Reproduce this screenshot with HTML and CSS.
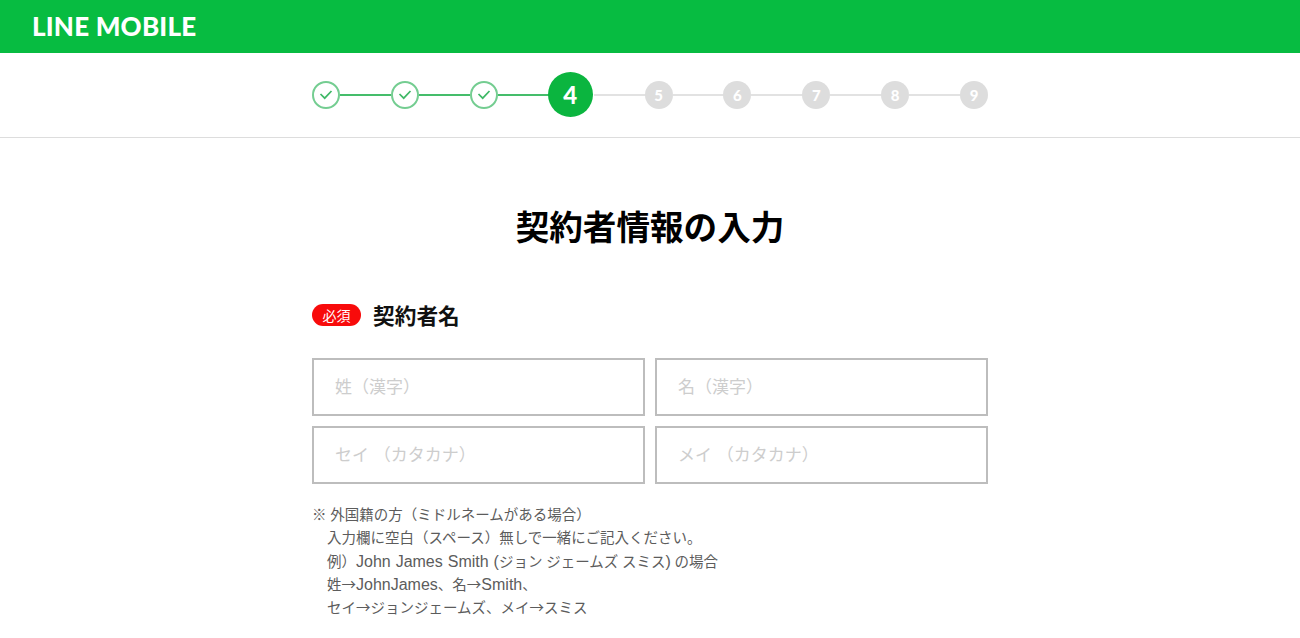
FILE: index.html
```html
<!DOCTYPE html>
<html lang="ja">
<head>
  <meta charset="UTF-8" />
  <title>LINE MOBILE</title>
  <link rel="stylesheet" href="styles.css">
</head>
<body>

<header class="cabecalho">
  <div class="logo">LINE MOBILE</div>
</header>

<div class="passos-area">
  <ol class="passos">
    <li class="passo feito"><svg width="14" height="12" viewBox="0 0 14 12"><path d="M1.5 5 L5.7 9.2 L12.5 2" fill="none" stroke="#3fb866" stroke-width="1.7"/></svg></li>
    <li class="linha verde"></li>
    <li class="passo feito"><svg width="14" height="12" viewBox="0 0 14 12"><path d="M1.5 5 L5.7 9.2 L12.5 2" fill="none" stroke="#3fb866" stroke-width="1.7"/></svg></li>
    <li class="linha verde"></li>
    <li class="passo feito"><svg width="14" height="12" viewBox="0 0 14 12"><path d="M1.5 5 L5.7 9.2 L12.5 2" fill="none" stroke="#3fb866" stroke-width="1.7"/></svg></li>
    <li class="linha verde"></li>
    <li class="passo atual">4</li>
    <li class="linha"></li>
    <li class="passo">5</li>
    <li class="linha"></li>
    <li class="passo">6</li>
    <li class="linha"></li>
    <li class="passo">7</li>
    <li class="linha"></li>
    <li class="passo">8</li>
    <li class="linha"></li>
    <li class="passo">9</li>
  </ol>
</div>

<main class="conteudo">
  <h1 class="titulo">契約者情報の入力</h1>

  <div class="rotulo">
    <span class="selo">必須</span>
    <h2>契約者名</h2>
  </div>

  <div class="campos">
    <div class="campo">姓（漢字）</div>
    <div class="campo">名（漢字）</div>
    <div class="campo">セイ （カタカナ）</div>
    <div class="campo">メイ （カタカナ）</div>
  </div>

  <div class="nota">
    <p>※ 外国籍の方（ミドルネームがある場合）</p>
    <p class="recuo">入力欄に空白（スペース）無しで一緒にご記入ください。</p>
    <p class="recuo">例）<span class="latim">John James Smith (</span>ジョン ジェームズ スミス<span class="latim">)</span> の場合</p>
    <p class="recuo">姓→<span class="latim">JohnJames</span>、名→<span class="latim">Smith</span>、</p>
    <p class="recuo">セイ→ジョンジェームズ、メイ→スミス</p>
  </div>
</main>

</body>
</html>
```

FILE: styles.css
```css
* {
  box-sizing: border-box;
}

html,
body {
  height: 638px;
  overflow: hidden;
}

body {
  margin: 0;
  font-family: "Liberation Sans", "Noto Sans CJK JP", sans-serif;
  background-color: #fff;
}

.cabecalho {
  height: 53px;
  background-color: #07bc41;
  padding-left: 32px;
  display: flex;
  align-items: center;
}

.logo {
  font-family: "Lato", sans-serif;
  font-weight: 900;
  font-size: 26px;
  letter-spacing: 0.2px;
  color: #fff;
  margin-top: -1px;
}

.passos-area {
  height: 85px;
  border-bottom: 1px solid #ddd;
  display: flex;
  justify-content: center;
  align-items: center;
}

.passos {
  list-style: none;
  margin: 0 0 1px;
  padding: 0;
  width: 676px;
  display: flex;
  align-items: center;
}

.passo {
  width: 28px;
  height: 28px;
  flex: none;
  border-radius: 50%;
  background-color: #ddd;
  color: #fff;
  font-family: "Lato", sans-serif;
  font-weight: 900;
  font-size: 15px;
  display: flex;
  justify-content: center;
  align-items: center;
}

.passo.feito {
  background-color: #fff;
  border: 2px solid #74cd91;
}

.passo.atual {
  width: 45px;
  height: 45px;
  margin: 0 1px 0 -1px;
  background-color: #0bb53f;
  font-size: 24px;
}

.linha {
  flex: 1;
  height: 2px;
  background-color: #e2e2e2;
}

.linha.verde {
  background-color: #45bd6b;
}

.conteudo {
  width: 676px;
  margin: 0 auto;
}

.titulo {
  margin: 69px 0 0;
  text-align: center;
  font-size: 33.6px;
  line-height: 44px;
  font-weight: 700;
  color: #000;
}

.rotulo {
  display: flex;
  align-items: center;
  gap: 12px;
  margin-top: 47px;
  height: 32px;
}

.selo {
  width: 49px;
  height: 22px;
  margin-top: 2px;
  border-radius: 11px;
  background-color: #f80b0b;
  color: #fff;
  font-size: 14px;
  display: flex;
  justify-content: center;
  align-items: center;
}

.rotulo h2 {
  margin: 0;
  font-size: 21.7px;
  font-weight: 700;
  color: #111;
}

.campos {
  display: grid;
  grid-template-columns: 1fr 1fr;
  gap: 10px;
  margin-top: 28px;
}

.campo {
  height: 58px;
  border: 2px solid #bdbdbd;
  padding: 0 0 3px 21px;
  display: flex;
  align-items: center;
  font-size: 17px;
  color: #cdcdcd;
}

.nota {
  margin-top: 18px;
  font-family: "Noto Sans CJK JP", sans-serif;
  font-size: 14.5px;
  line-height: 23.25px;
  word-spacing: 0.5px;
  color: #5c5c5c;
}

.nota p {
  margin: 0;
}

.nota .recuo {
  padding-left: 15px;
}

.latim {
  font-family: "Liberation Sans", sans-serif;
  font-size: 16px;
  line-height: 1;
}
```
